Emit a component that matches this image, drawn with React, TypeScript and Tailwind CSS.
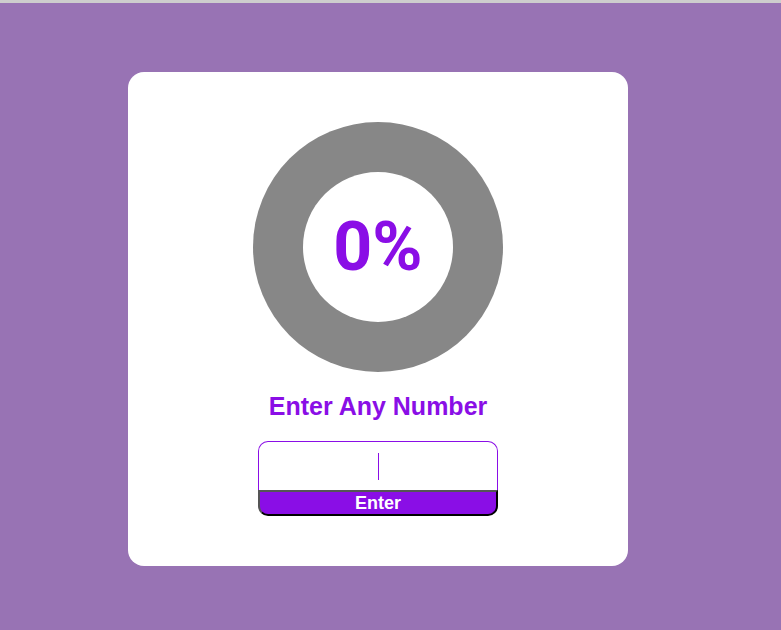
export default function App() {
  return (
    <div
      className="w-[781px] h-[630px] bg-[#9873b4] border-t-[3px] border-[#cdcdcd] flex flex-col items-start"
      style={{ fontFamily: '"Liberation Sans", Arial, sans-serif' }}
    >
      <div className="mt-[69px] ml-[128px] w-[500px] h-[494px] bg-white rounded-[16px] flex flex-col items-center pt-[50px]">
        <div className="w-[250px] h-[250px] rounded-full bg-[#878787] flex items-center justify-center">
          <div className="w-[150px] h-[150px] rounded-full bg-white flex items-center justify-center">
            <span
              className="text-[68px] font-bold text-[#8a0ee6] leading-none"
              style={{ fontFamily: 'Roboto, "Liberation Sans", sans-serif' }}
            >
              0%
            </span>
          </div>
        </div>
        <h2 className="mt-5 text-[25px] leading-[28px] font-bold text-[#8a0ee6]">Enter Any Number</h2>
        <div className="mt-[21px] w-[240px] flex flex-col">
          <div className="h-[49px] border-t border-l border-r border-[#8a0ee6] rounded-t-[10px] flex items-center justify-center">
            <div className="w-px h-[27px] bg-[#8a0ee6]" />
          </div>
          <button className="h-[26px] bg-[#8a0ee6] text-white text-[18px] font-bold leading-none border-2 border-t-[#555555] border-l-[#555555] border-r-black border-b-black rounded-b-[10px] flex items-center justify-center">
            Enter
          </button>
        </div>
      </div>
    </div>
  );
}
